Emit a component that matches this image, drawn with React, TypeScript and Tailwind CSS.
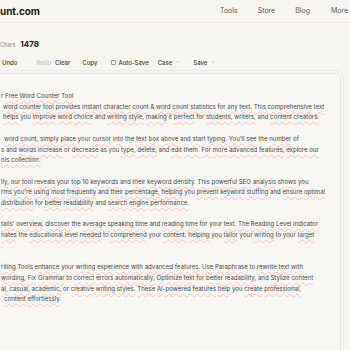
import { ChevronDown } from 'lucide-react'

const paragraphs: { pl: string; text: string }[][] = [
  [
    { pl: 'pl-0', text: 'r Free Word Counter Tool' },
    { pl: 'pl-[2px]', text: 'word counter tool provides instant character count & word count statistics for any text. This comprehensive text' },
    { pl: 'pl-[2px]', text: 'helps you improve word choice and writing style, making it perfect for students, writers, and content creators.' },
  ],
  [
    { pl: 'pl-[3px]', text: 'word count, simply place your cursor into the text box above and start typing. You\'ll see the number of' },
    { pl: 'pl-0', text: 's and words increase or decrease as you type, delete, and edit them. For more advanced features, explore our' },
    { pl: 'pl-0', text: 'ols collection.' },
  ],
  [
    { pl: 'pl-0', text: 'lly, our tool reveals your top 10 keywords and their keyword density. This powerful SEO analysis shows you' },
    { pl: 'pl-0', text: 'rms you\'re using most frequently and their percentage, helping you prevent keyword stuffing and ensure optimal' },
    { pl: 'pl-0', text: 'distribution for better readability and search engine performance.' },
  ],
  [
    { pl: 'pl-0', text: 'tails\' overview, discover the average speaking time and reading time for your text. The Reading Level indicator' },
    { pl: 'pl-0', text: 'nates the educational level needed to comprehend your content, helping you tailor your writing to your target' },
    { pl: 'pl-0', text: '.' },
  ],
  [
    { pl: 'pl-0', text: 'riting Tools enhance your writing experience with advanced features. Use Paraphrase to rewrite text with' },
    { pl: 'pl-0', text: 'wording, Fix Grammar to correct errors automatically, Optimize text for better readability, and Stylize content' },
    { pl: 'pl-0', text: 'al, casual, academic, or creative writing styles. These AI-powered features help you create professional,' },
    { pl: 'pl-[3px]', text: 'content effortlessly.' },
  ],
]

const plain = new Set(['&', 'and', 'a', 'to', 'of', 'the', 'it', 'as', 'or', 'you', 'in', '10', 'Tools', 'your', 'for'])

function Line({ text }: { text: string }) {
  const words = text.split(' ')
  return (
    <>
      {words.map((w, i) => (
        <span key={i}>
          <span
            className={
              plain.has(w.replace(/[.,]/g, '')) || w.length < 3
                ? ''
                : 'underline decoration-wavy decoration-[#f5c2c2] decoration-[0.5px] underline-offset-[1.5px]'
            }
          >
            {w}
          </span>
          {i < words.length - 1 ? ' ' : ''}
        </span>
      ))}
    </>
  )
}

export default function App() {
  const toolbar = 'text-[6px] text-[#3d3d3d] font-medium'

  return (
    <div className="w-[350px] h-[350px] overflow-hidden bg-[#f7f5f0] font-['Inter',sans-serif]">
      <header className="h-[23px] border-b border-[#ece9e1] flex items-center">
        <span className="text-[10px] font-bold text-[#1c1c1c] tracking-[-0.1px]">unt.com</span>
        <nav className="flex items-center text-[7px] text-[#555] ml-[180px] shrink-0">
          <span>Tools</span>
          <span className="ml-[20px]">Store</span>
          <span className="ml-[20px]">Blog</span>
          <span className="ml-[21px] flex items-center gap-[3px]">
            More <ChevronDown size={7} strokeWidth={1.5} />
          </span>
        </nav>
      </header>

      <div className="flex items-baseline mt-[15px] h-[10px]">
        <span className="text-[5.5px] text-[#8a8a8a]">Chars</span>
        <span className="ml-[5px] text-[8px] font-bold text-[#222]">1478</span>
      </div>

      <div className={`flex items-center mt-[9px] h-[10px] ${toolbar}`}>
        <span className="ml-[2px]">Undo</span>
        <span className="ml-[19px] text-[#c2c2c2]">Redo</span>
        <span className="ml-[4px]">Clear</span>
        <span className="ml-[12px]">Copy</span>
        <span className="ml-[14px] w-[5px] h-[5px] border border-[#9a9a9a] rounded-[1px]" />
        <span className="ml-[2px]">Auto-Save</span>
        <span className="ml-[9px] flex items-center gap-[3px]">
          Case <ChevronDown size={6} strokeWidth={1.5} className="text-[#888]" />
        </span>
        <span className="ml-[12px] flex items-center gap-[3px]">
          Save <ChevronDown size={6} strokeWidth={1.5} className="text-[#888]" />
        </span>
      </div>

      <div className="-ml-[20px] mt-[6px] w-[361px] h-[300px] border border-[#dfe3ea] rounded-[5px] ring-1 ring-[#e8eaef] ring-offset-[2px] ring-offset-[#f7f5f0] bg-[#f7f6f2] pt-[17px] pl-[20px]">
        <div className="text-[6.1px] leading-[10.7px] text-[#474747] whitespace-nowrap">
          {paragraphs.map((p, i) => (
            <div key={i} className={i > 0 ? 'mt-[10.7px]' : ''}>
              {p.map((l, j) => (
                <div key={j} className={l.pl}>
                  <Line text={l.text} />
                </div>
              ))}
            </div>
          ))}
        </div>
      </div>
    </div>
  )
}
